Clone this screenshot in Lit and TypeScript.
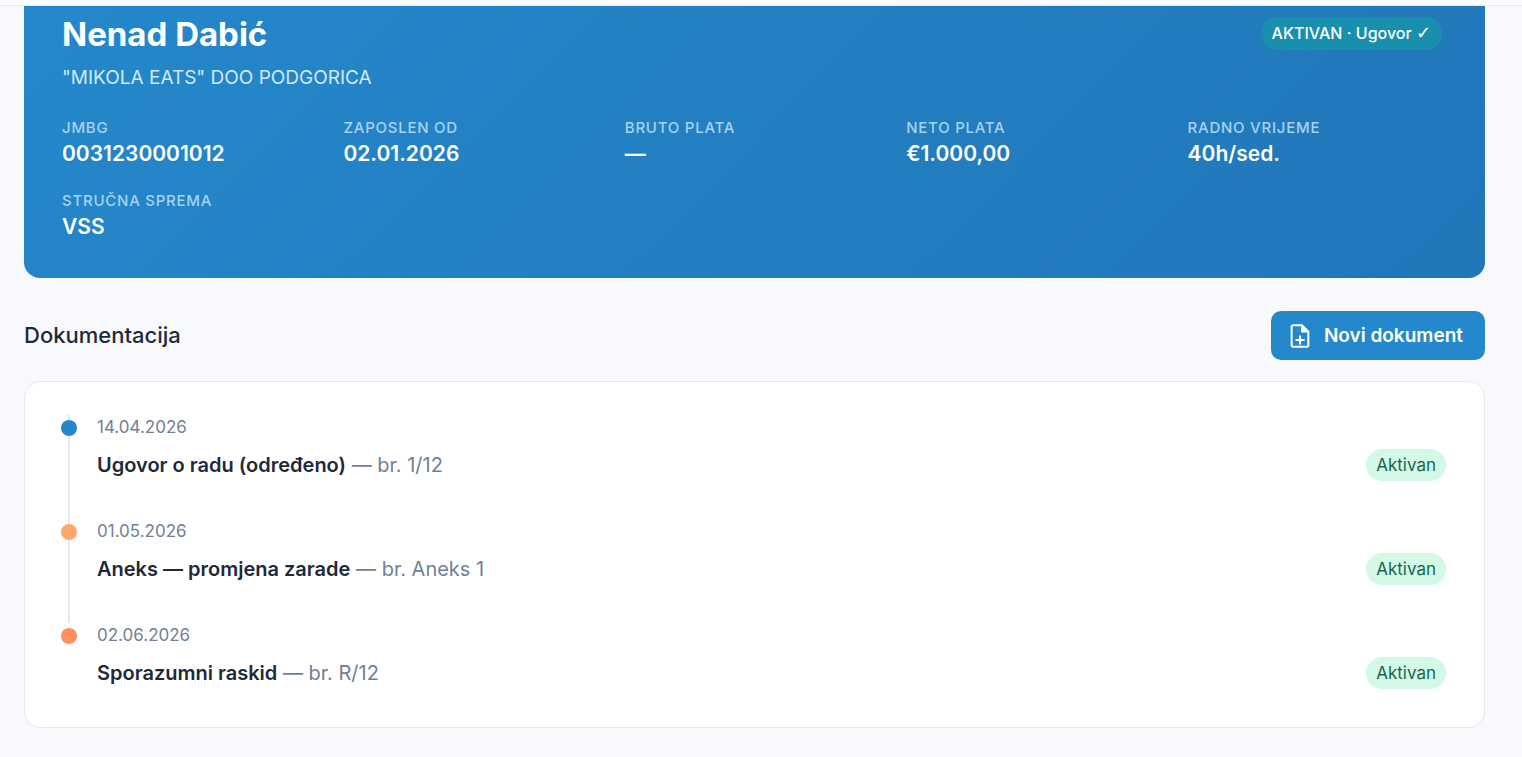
import { LitElement, html, css } from "lit";
import { customElement, property } from "lit/decorators.js";

interface Fact {
  label: string;
  value: string;
}

interface DocumentEntry {
  date: string;
  title: string;
  number: string;
  tone: "contract" | "annex" | "termination";
}

const facts: Fact[] = [
  { label: "JMBG", value: "0031230001012" },
  { label: "Zaposlen od", value: "02.01.2026" },
  { label: "Bruto plata", value: "—" },
  { label: "Neto plata", value: "€1.000,00" },
  { label: "Radno vrijeme", value: "40h/sed." },
  { label: "Stručna sprema", value: "VSS" },
];

const entries: DocumentEntry[] = [
  { date: "14.04.2026", title: "Ugovor o radu (određeno)", number: "1/12", tone: "contract" },
  { date: "01.05.2026", title: "Aneks — promjena zarade", number: "Aneks 1", tone: "annex" },
  { date: "02.06.2026", title: "Sporazumni raskid", number: "R/12", tone: "termination" },
];

@customElement("employee-card")
export class EmployeeCard extends LitElement {
  static styles = css`
    :host {
      display: block;
    }
    .card {
      padding: 7px 38px 37px;
      border-radius: 0 0 16px 16px;
      background: linear-gradient(135deg, #2488cb, #2176b8);
      color: #fff;
    }
    .head {
      display: flex;
      justify-content: space-between;
      align-items: flex-start;
      padding-right: 5px;
    }
    .name {
      margin: 0;
      font-size: 33px;
      line-height: 42px;
      font-weight: 700;
    }
    .company {
      margin: 9px 0 0;
      font-size: 19px;
      line-height: 28px;
      color: #d0e9f8;
    }
    .status {
      margin-top: 4px;
      padding: 0 11px;
      border-radius: 16px;
      background: #198fae;
      font-size: 16px;
      line-height: 33px;
      font-weight: 500;
    }
    .check {
      font-family: "DejaVu Sans", sans-serif;
      font-size: 18px;
      font-weight: 400;
      line-height: 1;
    }
    .facts {
      display: grid;
      grid-template-columns: repeat(5, 1fr);
      gap: 22px;
      margin: 25px 0 0;
    }
    .label {
      font-size: 15px;
      line-height: 22px;
      font-weight: 500;
      letter-spacing: 0.05em;
      text-transform: uppercase;
      color: #a5d3ee;
    }
    .value {
      margin: 0;
      font-size: 21px;
      line-height: 29px;
      font-weight: 600;
    }
  `;

  render() {
    return html`
      <section class="card">
        <div class="head">
          <div>
            <h1 class="name">Nenad Dabić</h1>
            <p class="company">"MIKOLA EATS" DOO PODGORICA</p>
          </div>
          <span class="status">AKTIVAN · Ugovor <span class="check">✓</span></span>
        </div>
        <dl class="facts">
          ${facts.map(
            (fact) => html`<div>
              <dt class="label">${fact.label}</dt>
              <dd class="value">${fact.value}</dd>
            </div>`
          )}
        </dl>
      </section>
    `;
  }
}

@customElement("document-timeline")
export class DocumentTimeline extends LitElement {
  @property({ attribute: false }) entries: DocumentEntry[] = [];

  static styles = css`
    :host {
      display: block;
    }
    .timeline {
      margin: 0;
      padding: 33px 38px 38px 36px;
      list-style: none;
      border: 1px solid #e2e8f0;
      border-radius: 16px;
      background: #fff;
    }
    .entry {
      display: grid;
      grid-template-columns: 16px 1fr;
      column-gap: 20px;
    }
    .rail {
      display: grid;
      justify-items: center;
    }
    .rail::before,
    .dot {
      grid-area: 1 / 1;
    }
    .rail::before {
      content: "";
      width: 2px;
      background: #e2e8f0;
    }
    .entry:last-child .rail::before {
      display: none;
    }
    .dot {
      width: 16px;
      height: 16px;
      margin-top: 5px;
      border-radius: 50%;
    }
    .contract {
      background: #2487cb;
    }
    .annex {
      background: #ffa76a;
    }
    .termination {
      background: #ff8f5c;
    }
    .body {
      padding-bottom: 38px;
    }
    .entry:last-child .body {
      padding-bottom: 0;
    }
    .date {
      display: block;
      font-size: 17px;
      line-height: 24px;
      color: #718096;
    }
    .row {
      display: flex;
      justify-content: space-between;
      align-items: center;
      margin-top: 10px;
    }
    .title {
      font-size: 20px;
      line-height: 32px;
      color: #718096;
    }
    .name {
      font-weight: 600;
      color: #1e293b;
    }
    .state {
      padding: 0 10px;
      border-radius: 16px;
      background: #d3f8e5;
      font-size: 17px;
      line-height: 32px;
      color: #17654f;
    }
  `;

  render() {
    return html`
      <ol class="timeline">
        ${this.entries.map(
          (entry) => html`<li class="entry">
            <div class="rail"><span class="dot ${entry.tone}"></span></div>
            <div class="body">
              <time class="date">${entry.date}</time>
              <div class="row">
                <span class="title"><span class="name">${entry.title}</span> — br. ${entry.number}</span>
                <span class="state">Aktivan</span>
              </div>
            </div>
          </li>`
        )}
      </ol>
    `;
  }
}

@customElement("app-root")
export class AppRoot extends LitElement {
  static styles = css`
    :host {
      display: block;
      min-height: 100vh;
      background: #f8f9fd;
      font-family: Inter, "Noto Sans", sans-serif;
      color: #1e293b;
    }
    .topbar {
      height: 5px;
      border-bottom: 1px solid #e2e8f0;
      background: #fff;
    }
    .content {
      padding: 0 37px 28px 24px;
    }
    .section-head {
      display: flex;
      justify-content: space-between;
      align-items: center;
      margin: 33px 0 21px;
    }
    .section-title {
      margin: 0;
      font-size: 22px;
      line-height: 31px;
      font-weight: 500;
    }
    .new-document {
      display: flex;
      align-items: center;
      gap: 10px;
      height: 49px;
      padding: 0 22px 0 15px;
      border: 0;
      border-radius: 10px;
      background: #2488cc;
      color: #fff;
      font-family: inherit;
      font-size: 19px;
      font-weight: 600;
      cursor: pointer;
    }
    .icon {
      width: 28px;
      height: 28px;
      fill: currentColor;
    }
  `;

  render() {
    return html`
      <header class="topbar"></header>
      <main class="content">
        <employee-card></employee-card>
        <div class="section-head">
          <h2 class="section-title">Dokumentacija</h2>
          <button class="new-document" type="button">
            <svg class="icon" viewBox="0 0 24 24" aria-hidden="true">
              <path
                d="M12.900 11.500h-1.700v3H8.200v1.700h3v3h1.700v-3h3v-1.700h-3zM14 2H6c-1.100 0-2 .9-2 2v16c0 1.100.890 2 1.990 2H18c1.100 0 2-.9 2-2V8l-6-6zm4.300 18.300H5.700V3.700H13V9h5.300v11.300z"
              />
            </svg>
            Novi dokument
          </button>
        </div>
        <document-timeline .entries=${entries}></document-timeline>
      </main>
    `;
  }
}
